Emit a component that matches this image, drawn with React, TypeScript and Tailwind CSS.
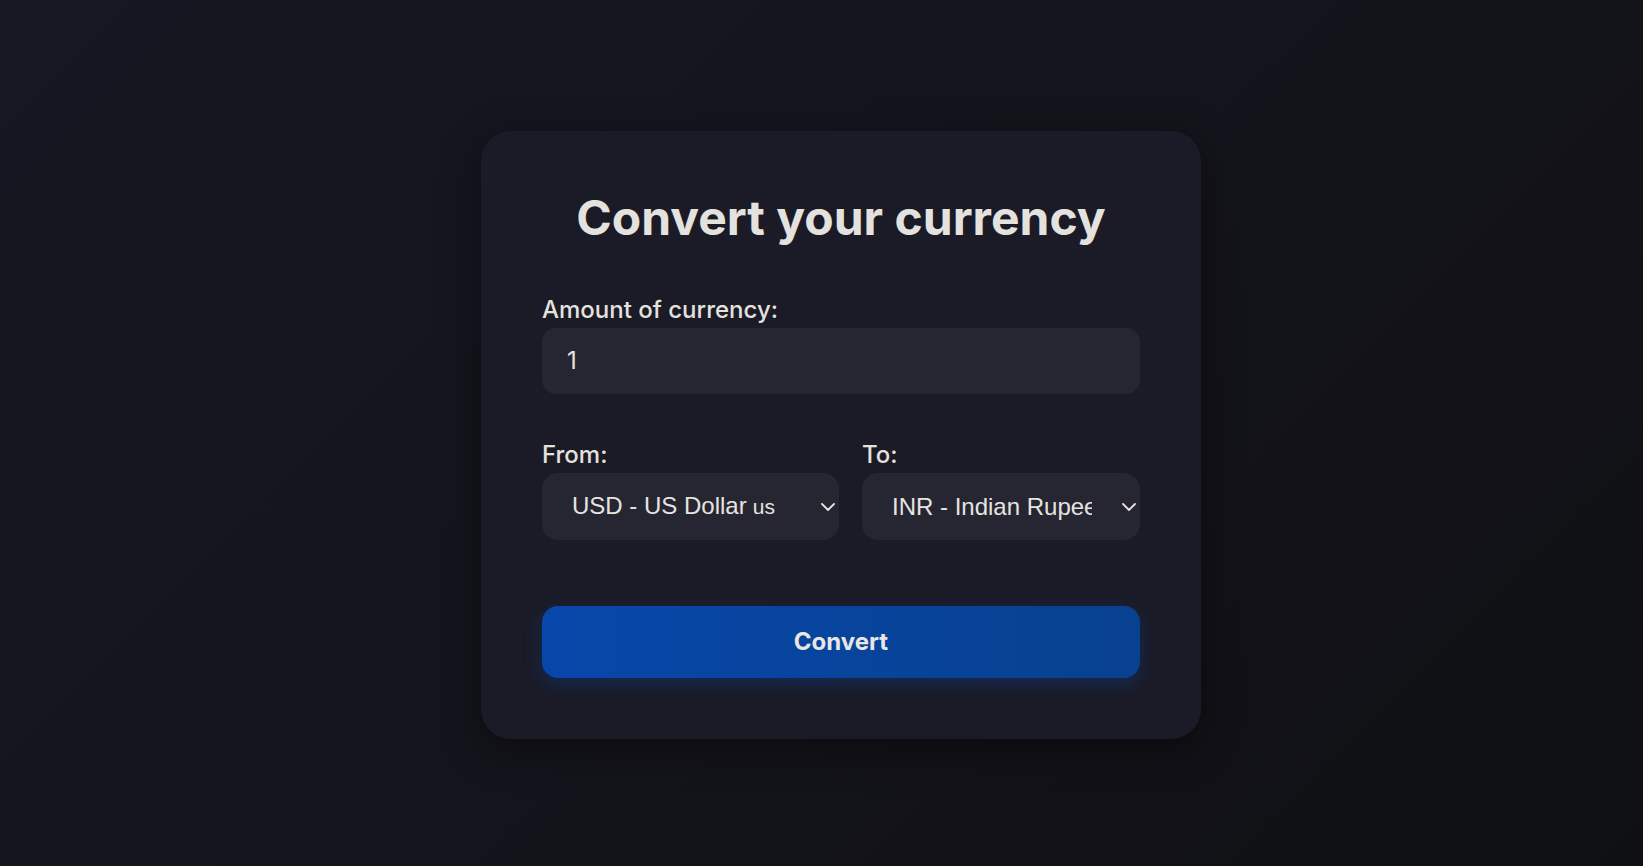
import React from "react";

function Chevron() {
  return (
    <svg width="14" height="8" viewBox="0 0 14 8" fill="none" className="shrink-0">
      <path d="M1 1L7 7L13 1" stroke="#e6e4e0" strokeWidth="1.8" strokeLinecap="round" strokeLinejoin="round" />
    </svg>
  );
}

function FakeSelect({ text, flag, width }: { text: string; flag?: string; width: string }) {
  return (
    <div
      className={`${width} h-[67px] rounded-[16px] bg-[#262633] flex items-center pl-[30px] pr-[4px]`}
    >
      <div className="flex-1 overflow-hidden whitespace-nowrap text-[24px] leading-[28px] text-[#e6e4e0] [font-family:'Liberation_Sans',Arial,sans-serif] mr-[30px]">
        {text}
        {flag && <span className="text-[21px] ml-[6px]">{flag}</span>}
      </div>
      <Chevron />
    </div>
  );
}

export default function App() {
  return (
    <div className="w-full h-[866px] bg-[linear-gradient(135deg,#171723_0%,#14141c_50%,#0f1013_100%)] flex items-start justify-center pl-[39px] pt-[131px] [font-family:Inter,'Noto_Sans',sans-serif]">
      <div className="w-[720px] h-[608px] rounded-[30px] bg-[#1b1b27] px-[61px] pt-[58px] shadow-[0_10px_40px_rgba(0,0,0,0.45)] flex flex-col">
        <h1 className="text-[48px] leading-[58px] font-bold text-center text-[#e4e2de]">
          Convert your currency
        </h1>
        <label className="mt-[50px] text-[24px] leading-[26px] font-medium text-[#e4e2de]">
          Amount of currency:
        </label>
        <div className="mt-[5px] h-[66px] rounded-[14px] bg-[#262633] flex items-center pl-[25px] text-[24px] text-[#e6e4e0]">
          1
        </div>
        <div className="mt-[48px] flex gap-[23px]">
          <div className="flex flex-col">
            <span className="text-[24px] leading-[26px] font-medium text-[#e4e2de]">From:</span>
            <div className="mt-[5px]">
              <FakeSelect text="USD - US Dollar" flag="us" width="w-[297px]" />
            </div>
          </div>
          <div className="flex flex-col">
            <span className="text-[24px] leading-[26px] font-medium text-[#e4e2de]">To:</span>
            <div className="mt-[5px]">
              <FakeSelect text="INR - Indian Rupee 🇮🇳" width="w-[278px]" />
            </div>
          </div>
        </div>
        <button className="mt-[66px] h-[72px] rounded-[16px] bg-[linear-gradient(90deg,#0847aa,#07418f)] text-[24px] font-bold text-[#e8e7e4] shadow-[0_6px_18px_rgba(8,71,170,0.35)]">
          Convert
        </button>
      </div>
    </div>
  );
}
